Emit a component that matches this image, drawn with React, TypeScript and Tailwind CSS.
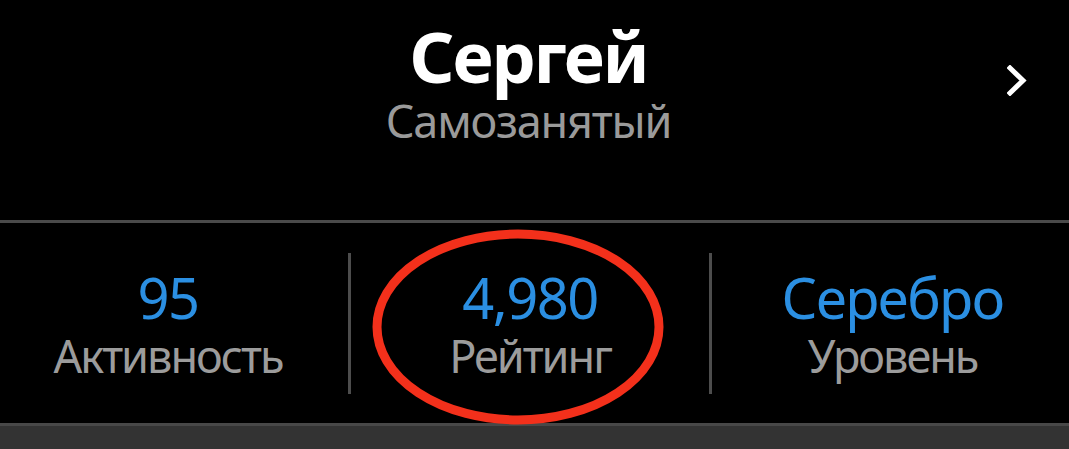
const stats = [
  { value: "95", label: "Активность" },
  { value: "4,980", label: "Рейтинг" },
  { value: "Серебро", label: "Уровень" },
];

export default function App() {
  return (
    <div
      className="relative h-[449px] w-[1069px] overflow-hidden bg-black"
      style={{ fontFamily: '"Noto Sans", "Open Sans", sans-serif' }}
    >
      {/* header */}
      <div className="relative flex h-[220px] flex-col items-center pr-[12px] pt-[17px]">
        <div className="text-[70px] font-bold leading-[78px] tracking-[-2.2px] text-white">Сергей</div>
        <div className="text-[45px] leading-[52px] tracking-[-1.2px] text-[#9a9a9a]">Самозанятый</div>
        <button className="absolute right-[40px] top-[65px] text-white">
          <svg width="22" height="31" viewBox="0 0 22 31" fill="none">
            <path d="M3 3 L16 15.5 L3 28" stroke="currentColor" strokeWidth="5" strokeLinecap="square" />
          </svg>
        </button>
      </div>

      <div className="h-[3px] bg-[#4a4a4a]" />

      {/* stats row */}
      <div className="flex h-[200px] items-center">
        {stats.map((s, i) => (
          <div key={s.label} className="contents">
            {i > 0 && <div className="h-[141px] w-[3px] shrink-0 bg-[#4d4d4d]" />}
            <div
              className={
                i === 0
                  ? "flex w-[348px] flex-col items-center pr-[12px]"
                  : i === 1
                    ? "flex w-[358px] flex-col items-center"
                    : "flex flex-1 flex-col items-center pl-[4px]"
              }
            >
              <div className="text-[56px] leading-[64px] tracking-[-1.5px] text-[#2b8fe2]">{s.value}</div>
              <div className="mt-[1px] text-[45px] leading-[52px] tracking-[-2px] text-[#9c9c9c]">{s.label}</div>
            </div>
          </div>
        ))}
      </div>

      {/* bottom bar */}
      <div className="h-[26px] border-t-[3px] border-[#484848] bg-[#333333]" />

      {/* red annotation */}
      <svg
        className="pointer-events-none absolute left-[368px] top-[225px]"
        width="300"
        height="205"
        viewBox="0 0 300 205"
      >
        <ellipse cx="150" cy="102" rx="141" ry="93" fill="none" stroke="#f3301b" strokeWidth="9" />
      </svg>
    </div>
  );
}
